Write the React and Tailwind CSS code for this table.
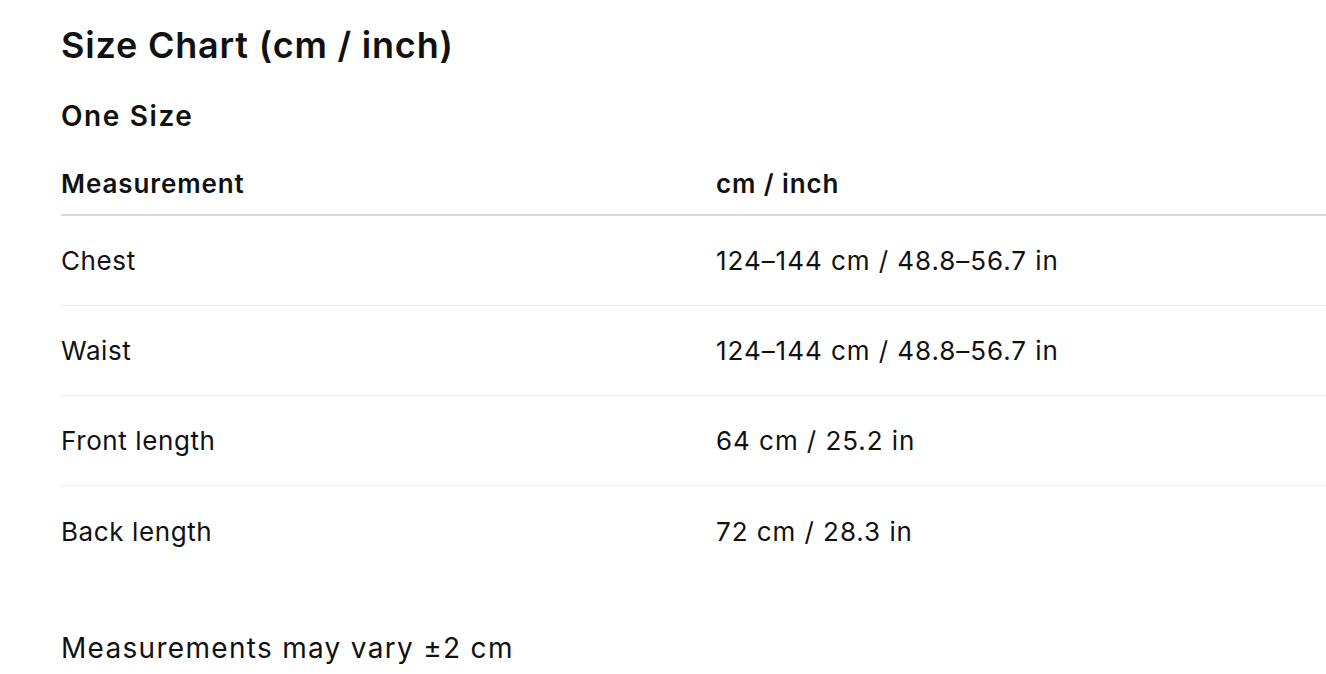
const rows = [
  { name: 'Chest', value: '124–144 cm / 48.8–56.7 in' },
  { name: 'Waist', value: '124–144 cm / 48.8–56.7 in' },
  { name: 'Front length', value: '64 cm / 25.2 in' },
  { name: 'Back length', value: '72 cm / 28.3 in' },
];

function App() {
  return (
    <div className="min-h-screen bg-white pl-[61px] pt-[25px] text-[#111] font-['Inter',sans-serif]">
      <h1 className="text-[36px] leading-[40px] font-semibold tracking-[0.8px]">Size Chart (cm / inch)</h1>
      <h2 className="mt-[35px] text-[28px] leading-[32px] font-semibold tracking-[1.6px]">One Size</h2>

      {/* tabela */}
      <div className="mt-[20px]">
        <div className="grid grid-cols-[655px_1fr] h-[64px] items-center border-b-2 border-[#d9d9d9] text-[26px] font-semibold tracking-[0.9px]">
          <div>Measurement</div>
          <div>cm / inch</div>
        </div>
        {rows.map((r, i) => (
          <div
            key={r.name}
            className={`grid grid-cols-[655px_1fr] h-[90px] items-center text-[26px] tracking-[0.6px] ${i < rows.length - 1 ? 'border-b border-[#efefef]' : ''}`}
          >
            <div>{r.name}</div>
            <div className="tracking-[0.95px]">{r.value}</div>
          </div>
        ))}
      </div>

      <p className="mt-[56px] text-[28px] leading-[32px] tracking-[1.3px]">Measurements may vary ±2 cm</p>
    </div>
  );
}

export default App;
